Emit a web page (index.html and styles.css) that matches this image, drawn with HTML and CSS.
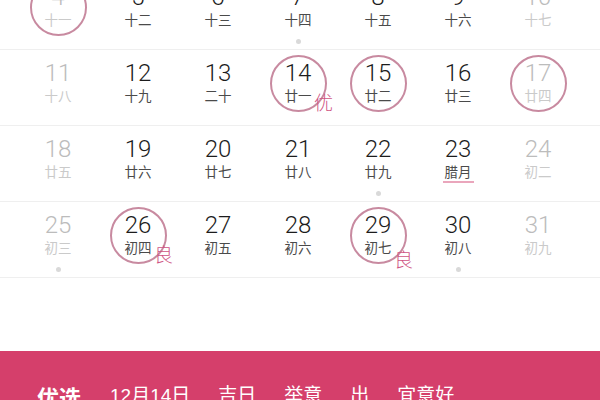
FILE: index.html
```html
<!DOCTYPE html>
<html lang="zh">
<head>
<meta charset="utf-8">
<link rel="stylesheet" href="styles.css">
</head>
<body>
<div class="page">
  <div class="calendar">
    <div class="week">
      <div class="cell off circled"><span class="num">4</span><span class="lunar">十一</span></div>
      <div class="cell"><span class="num">5</span><span class="lunar">十二</span></div>
      <div class="cell"><span class="num">6</span><span class="lunar">十三</span></div>
      <div class="cell"><span class="num">7</span><span class="lunar">十四</span><span class="dot"></span></div>
      <div class="cell"><span class="num">8</span><span class="lunar">十五</span></div>
      <div class="cell"><span class="num">9</span><span class="lunar">十六</span></div>
      <div class="cell off"><span class="num">10</span><span class="lunar">十七</span></div>
    </div>
    <div class="week">
      <div class="cell off"><span class="num">11</span><span class="lunar">十八</span></div>
      <div class="cell"><span class="num">12</span><span class="lunar">十九</span></div>
      <div class="cell"><span class="num">13</span><span class="lunar">二十</span></div>
      <div class="cell circled"><span class="num">14</span><span class="lunar">廿一</span><span class="tag">优</span></div>
      <div class="cell circled"><span class="num">15</span><span class="lunar">廿二</span></div>
      <div class="cell"><span class="num">16</span><span class="lunar">廿三</span></div>
      <div class="cell off circled"><span class="num">17</span><span class="lunar">廿四</span></div>
    </div>
    <div class="week">
      <div class="cell off"><span class="num">18</span><span class="lunar">廿五</span></div>
      <div class="cell"><span class="num">19</span><span class="lunar">廿六</span></div>
      <div class="cell"><span class="num">20</span><span class="lunar">廿七</span></div>
      <div class="cell"><span class="num">21</span><span class="lunar">廿八</span></div>
      <div class="cell"><span class="num">22</span><span class="lunar">廿九</span><span class="dot"></span></div>
      <div class="cell"><span class="num">23</span><span class="lunar">腊月</span><span class="underline"></span></div>
      <div class="cell off"><span class="num">24</span><span class="lunar">初二</span></div>
    </div>
    <div class="week">
      <div class="cell off"><span class="num">25</span><span class="lunar">初三</span><span class="dot"></span></div>
      <div class="cell circled"><span class="num">26</span><span class="lunar">初四</span><span class="tag">良</span></div>
      <div class="cell"><span class="num">27</span><span class="lunar">初五</span></div>
      <div class="cell"><span class="num">28</span><span class="lunar">初六</span></div>
      <div class="cell circled"><span class="num">29</span><span class="lunar">初七</span><span class="tag tag-low">良</span></div>
      <div class="cell"><span class="num">30</span><span class="lunar">初八</span><span class="dot"></span></div>
      <div class="cell off"><span class="num">31</span><span class="lunar">初九</span></div>
    </div>
  </div>
  <div class="footer">
    <span class="label">优选</span>
    <span class="item">12月14日</span>
    <span class="item">吉日</span>
    <span class="item">举意</span>
    <span class="item">出</span>
    <span class="item">宜意好</span>
  </div>
</div>
</body>
</html>
```
FILE: styles.css
```css
html, body {
  margin: 0;
  padding: 0;
  background: #fff;
}
.page {
  width: 600px;
  height: 400px;
  overflow: hidden;
  display: flex;
  flex-direction: column;
  font-family: "Liberation Sans", "Noto Sans CJK SC", sans-serif;
}
.calendar {
  margin-top: -26px;
}
.week {
  display: grid;
  grid-template-columns: repeat(7, 80px);
  padding-left: 18px;
  height: 75px;
  border-bottom: 1px solid #efefef;
}
.cell {
  position: relative;
  display: flex;
  flex-direction: column;
  align-items: center;
  padding-top: 9px;
}
.num {
  font-family: Roboto, "Liberation Sans", sans-serif;
  font-size: 24px;
  line-height: 28px;
  color: #1c1c1c;
  font-weight: 300;
}
.lunar {
  font-size: 13.5px;
  line-height: 16px;
  color: #4a4a4a;
  font-family: "Noto Sans CJK SC", sans-serif;
  font-weight: 400;
}
.off .num { color: #bcbcbc; }
.off .lunar { color: #cacaca; }
.dot {
  width: 5px;
  height: 5px;
  border-radius: 50%;
  background: #d9d9d9;
  margin-top: 12px;
}
.underline {
  width: 31px;
  height: 2px;
  background: #eaa6bc;
  margin-top: 2px;
}
.circled::before {
  content: "";
  position: absolute;
  left: 12px;
  top: 5px;
  width: 57px;
  height: 57px;
  box-sizing: border-box;
  border: 2px solid #c88aa0;
  border-radius: 50%;
}
.tag {
  position: absolute;
  left: 56px;
  top: 42px;
  font-size: 19px;
  line-height: 20px;
  color: #cf5584;
  font-family: "Noto Sans CJK SC", sans-serif;
  font-weight: 300;
}
.tag-low { top: 47px; }
.footer {
  margin-top: auto;
  height: 49px;
  box-sizing: border-box;
  background: #d53f6b;
  display: flex;
  align-items: flex-start;
  gap: 28px;
  padding: 34px 0 0 37px;
  color: #fff;
  font-family: "Liberation Sans", "Noto Sans CJK SC", sans-serif;
  font-size: 19px;
  line-height: 22px;
}
.label {
  font-family: "Noto Sans CJK SC", sans-serif;
  font-size: 22px;
  font-weight: 700;
  margin-right: 1px;
}
```
